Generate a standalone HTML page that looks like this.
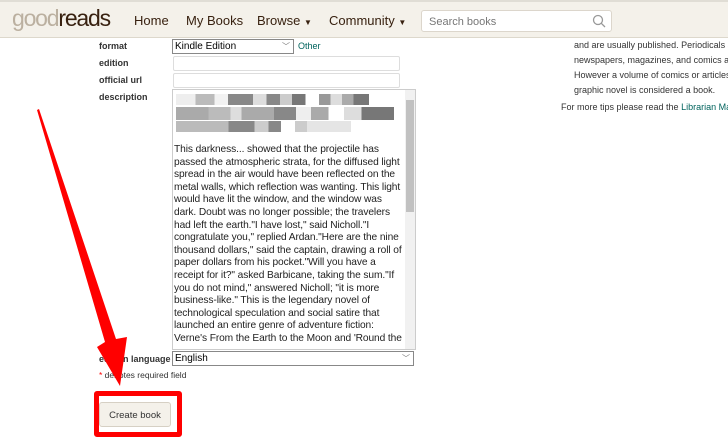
<!DOCTYPE html>
<html><head><style>
body{margin:0;width:728px;height:439px;overflow:hidden;background:#fff;font-family:"Liberation Sans",sans-serif;position:relative}
.hdr{position:absolute;left:0;top:0;width:728px;height:38px;background:#f4f1ea;border-bottom:1px solid #ddd8cc;border-top:2px solid #e0ddd5;box-sizing:border-box}
.logo{position:absolute;left:12px;top:3px;font-size:23px;color:#382110;letter-spacing:-1.2px}
.logo span{color:#bbb0a0}
.nav{position:absolute;top:11px;font-size:13px;color:#382110}
.search{position:absolute;left:421px;top:8px;width:191px;height:22px;background:#fff;border:1px solid #dcd6cc;border-radius:3px;font-size:11px;color:#777;box-sizing:border-box;padding:5px 7px}
.lbl{position:absolute;left:99px;font-size:9px;font-weight:bold;color:#333;white-space:nowrap}
.inp{position:absolute;left:173px;width:225px;height:13px;border:1px solid #ddd;border-radius:2px}
.side{position:absolute;font-size:9px;color:#333;line-height:15px;white-space:nowrap}
.ta{position:absolute;left:172px;top:89px;width:242px;height:259px;border:1px solid #ccc;overflow:hidden}
.txt{position:absolute;left:1px;top:54px;font-size:10.2px;line-height:12.6px;color:#222;white-space:nowrap;letter-spacing:-0.1px}
.sb{position:absolute;right:0;top:0;width:10px;height:259px;background:#f1f1f1}
.th{position:absolute;right:1px;top:10px;width:8px;height:112px;background:#c1c1c1}
.pix{position:absolute;height:11px}
</style></head><body>
<div class="hdr">
<div class="logo"><span>good</span>reads</div>
<div class="nav" style="left:134px">Home</div>
<div class="nav" style="left:186px">My Books</div>
<div class="nav" style="left:257px">Browse <span style="font-size:8px">▼</span></div>
<div class="nav" style="left:329px">Community <span style="font-size:8px">▼</span></div>
<div class="search">Search books<svg style="position:absolute;right:5px;top:3px" width="14" height="14"><circle cx="6" cy="6" r="4.5" fill="none" stroke="#999" stroke-width="1.3"/><line x1="9.3" y1="9.3" x2="13" y2="13" stroke="#999" stroke-width="1.3"/></svg></div>
</div>
<div class="lbl" style="top:41px">format</div>
<div style="position:absolute;left:172px;top:39px;width:118px;height:13px;border:1px solid #888;font-size:10px;padding-left:2px;color:#000;line-height:13px">Kindle Edition<span style="position:absolute;right:3px;color:#777;font-size:8px">﹀</span></div>
<div style="position:absolute;left:298px;top:41px;font-size:9px;color:#00635d">Other</div>
<div class="lbl" style="top:58px">edition</div><div class="inp" style="top:56px"></div>
<div class="lbl" style="top:75px">official url</div><div class="inp" style="top:73px"></div>
<div class="lbl" style="top:92px">description</div>
<div class="ta">
<div class="pix" style="left:3px;top:4px;width:193px;background:linear-gradient(90deg,#eee 0 10%,#bbb 10% 20%,#f2f2f2 20% 27%,#888 27% 40%,#ddd 40% 47%,#888 47% 54%,#ccc 54% 60%,#777 60% 67%,#fff 67% 74%,#999 74% 80%,#ddd 80% 86%,#aaa 86% 92%,#777 92% 100%)"></div>
<div class="pix" style="left:3px;top:17px;width:218px;height:13px;background:linear-gradient(90deg,#aaa 0 15%,#bbb 15% 25%,#ddd 25% 30%,#aaa 30% 45%,#888 45% 55%,#eee 55% 62%,#aaa 62% 70%,#fff 70% 77%,#ddd 77% 85%,#777 85% 100%)"></div>
<div class="pix" style="left:3px;top:31px;width:175px;background:linear-gradient(90deg,#bbb 0 30%,#888 30% 45%,#ccc 45% 53%,#888 53% 60%,#fff 60% 68%,#ccc 68% 75%,#e5e5e5 75% 100%)"></div>
<div class="txt">This darkness... showed that the projectile has<br>passed the atmospheric strata, for the diffused light<br>spread in the air would have been reflected on the<br>metal walls, which reflection was wanting. This light<br>would have lit the window, and the window was<br>dark. Doubt was no longer possible; the travelers<br>had left the earth."I have lost," said Nicholl."I<br>congratulate you," replied Ardan."Here are the nine<br>thousand dollars," said the captain, drawing a roll of<br>paper dollars from his pocket."Will you have a<br>receipt for it?" asked Barbicane, taking the sum."If<br>you do not mind," answered Nicholl; "it is more<br>business-like." This is the legendary novel of<br>technological speculation and social satire that<br>launched an entire genre of adventure fiction:<br>Verne's From the Earth to the Moon and 'Round the</div>
<div class="sb"><div class="th"></div></div>
</div>
<div class="lbl" style="top:354px">edition language</div>
<div style="position:absolute;left:172px;top:351px;width:238px;height:13px;border:1px solid #888;font-size:10px;padding-left:2px;line-height:13px">English<span style="position:absolute;right:3px;color:#777;font-size:8px">﹀</span></div>
<div style="position:absolute;left:99px;top:370px;font-size:8.5px;color:#333"><span style="color:red">*</span> denotes required field</div>
<div style="position:absolute;left:94px;top:391px;width:88px;height:46px;border:5px solid #f00;border-radius:3px;box-sizing:border-box"></div>
<div style="position:absolute;left:99px;top:402px;width:72px;height:25px;background:#f4f1ea;border:1px solid #d6d0c4;border-radius:3px;font-size:9.5px;color:#333;text-align:center;line-height:25px;box-sizing:border-box">Create book</div>
<svg style="position:absolute;left:0;top:0" width="728" height="439"><polygon points="37,110 39,109 116,339 127,337 120,386 97,347 105,342" fill="#f00"/></svg>
<div class="side" style="left:574px;top:38px">and are usually published. Periodicals such<br>newspapers, magazines, and comics are n<br>However a volume of comics or articles o<br>graphic novel is considered a book.</div>
<div class="side" style="left:561px;top:100px">For more tips please read the <span style="color:#00635d">Librarian Manu</span></div>
</body></html>
